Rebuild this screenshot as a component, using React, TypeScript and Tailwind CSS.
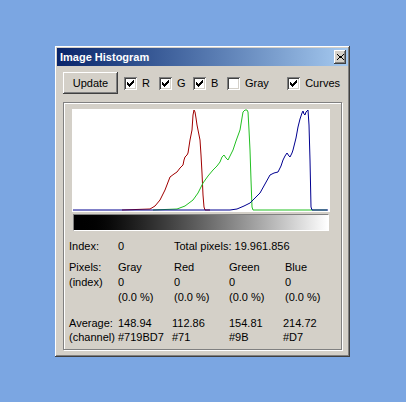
import React from 'react';

const bevelOut =
  'shadow-[inset_-1px_-1px_0_#404040,inset_1px_1px_0_#ffffff,inset_-2px_-2px_0_#808080,inset_2px_2px_0_#d4d0c8]';
const bevelIn =
  'shadow-[inset_1px_1px_0_#808080,inset_-1px_-1px_0_#ffffff,inset_2px_2px_0_#404040,inset_-2px_-2px_0_#d4d0c8]';

const Check = ({ checked, label, className = '' }: { checked: boolean; label: string; className?: string }) => (
  <div className={`flex items-center gap-[5px] ${className}`}>
    <div className={`w-[13px] h-[13px] bg-white ${bevelIn} flex items-center justify-center`}>
      {checked && (
        <svg width="13" height="13" viewBox="0 0 13 13" shapeRendering="crispEdges">
          <polygon points="3,5 3,8 5,10 10,5 10,2 5,7" fill="#000" />
        </svg>
      )}
    </div>
    <span>{label}</span>
  </div>
);

const red =
  'M122,210 L150,209 L155,206 L160,200 L165,190 L170,177 L174,174 L177,172 L180,168 L183,165 L184,160 L185,157 L187,155 L188,153 L190,140 L192,130 L193,115 L194,110 L195,112 L196,118 L197,125 L199,135 L200,140 L201,155 L202,173 L203,195 L204,207 L205,210 L210,210';
const green =
  'M153,210 L177,209 L185,206 L193,200 L198,193 L203,183 L208,176 L213,170 L217,166 L220,162 L222,157 L224,155 L226,158 L228,160 L230,156 L233,150 L236,141 L240,130 L242,118 L243,112 L245,110 L247,110 L248,112 L249,130 L250,150 L251,180 L252,207 L253,210 L327,210';
const blue =
  'M73,210 L230,210 L237,209 L244,206 L250,203 L255,198 L260,193 L265,184 L270,175 L274,173 L278,172 L281,166 L283,160 L285,156 L287,153 L289,156 L290,157 L292,153 L293,150 L296,138 L298,127 L300,119 L302,113 L303,111 L304,114 L305,115 L306,112 L308,110 L309,125 L310,160 L311,207 L312,210 L328,210';

export default function App() {
  return (
    <div
      className="w-[406px] h-[402px] bg-[#7ba6e2] pl-[55px] pt-[46px] text-[11px] text-black"
      style={{ fontFamily: '"Liberation Sans", Arial, sans-serif' }}
    >
      <div className={`w-[295px] h-[311px] bg-[#d4d0c8] p-[2px] ${bevelOut}`}>
        {/* title bar */}
        <div className="h-[18px] bg-gradient-to-r from-[#0a246a] to-[#a6caf0] flex items-center justify-between pl-[3px] pr-[2px]">
          <span className="text-white font-bold text-[11px]">Image Histogram</span>
          <div className={`w-[12px] h-[14px] bg-[#d4d0c8] ${bevelOut} flex items-center justify-center`}>
            <svg width="7" height="6" viewBox="0 0 7 6" shapeRendering="crispEdges">
              <path d="M0,0h1v1h-1z M6,0h1v1h-1z M1,1h1v1h-1z M5,1h1v1h-1z M2,2h3v2h-3z M1,4h1v1h-1z M5,4h1v1h-1z M0,5h1v1h-1z M6,5h1v1h-1z" fill="#000" />
            </svg>
          </div>
        </div>

        {/* toolbar */}
        <div className="flex items-center mt-[6px] ml-[6px] mr-[8px]">
          <button className={`w-[55px] h-[22px] bg-[#d4d0c8] ${bevelOut} text-[11px] mr-[6px]`}>Update</button>
          <Check checked label="R" className="w-[35px]" />
          <Check checked label="G" className="w-[34px]" />
          <Check checked label="B" className="w-[34px]" />
          <Check checked={false} label="Gray" />
          <Check checked label="Curves" className="ml-auto" />
        </div>

        {/* group frame */}
        <div className="mt-[8px] ml-[6px] w-[279px] h-[248px] border border-[#808080] shadow-[inset_1px_1px_0_#ffffff,1px_1px_0_#ffffff]">
          <div className="ml-[8px] mt-[6px] w-[258px] h-[103px] bg-white">
            <svg width="258" height="103" viewBox="72 109 258 103" fill="none" strokeWidth="1">
              <path d={red} stroke="#a00000" />
              <path d={green} stroke="#22c022" />
              <path d={blue} stroke="#000090" />
            </svg>
          </div>
          <div className="ml-[9px] mt-[2px] w-[256px] h-[17px] border-t border-l border-[#808080] border-b border-r border-b-white border-r-white bg-gradient-to-r from-black to-white" />

          <div className="ml-[5px] mt-[9px] leading-[13px]">
            <div className="flex">
              <span className="w-[49px]">Index:</span>
              <span className="w-[56px]">0</span>
              <span>Total pixels: 19.961.856</span>
            </div>

            <div className="flex mt-[7px] leading-[15px]">
              <div className="w-[49px] flex flex-col">
                <span>Pixels:</span>
                <span>(index)</span>
              </div>
              {['Gray', 'Red', 'Green', 'Blue'].map((c, i) => (
                <div key={c} className={`flex flex-col ${i === 1 ? 'w-[55px]' : 'w-[56px]'}`}>
                  <span>{c}</span>
                  <span>0</span>
                  <span>(0.0 %)</span>
                </div>
              ))}
            </div>

            <div className="flex mt-[11px] leading-[14px]">
              <div className="w-[49px] flex flex-col">
                <span>Average:</span>
                <span>(channel)</span>
              </div>
              <div className="w-[54px] flex flex-col">
                <span>148.94</span>
                <span>#719BD7</span>
              </div>
              <div className="w-[57px] flex flex-col">
                <span>112.86</span>
                <span>#71</span>
              </div>
              <div className="w-[54px] flex flex-col">
                <span>154.81</span>
                <span>#9B</span>
              </div>
              <div className="flex flex-col">
                <span>214.72</span>
                <span>#D7</span>
              </div>
            </div>
          </div>
        </div>
      </div>
    </div>
  );
}
